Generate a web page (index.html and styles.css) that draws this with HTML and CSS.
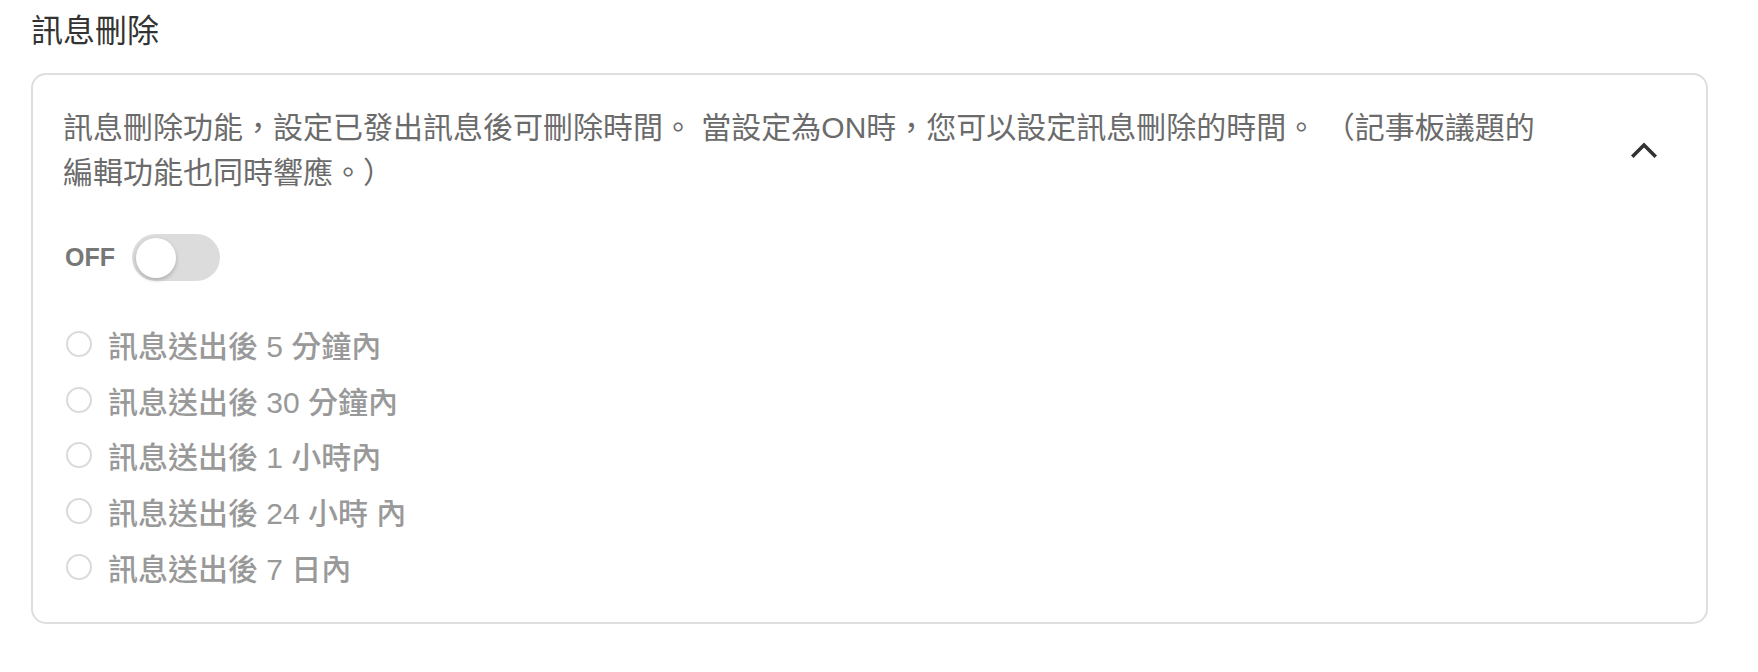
FILE: index.html
```html
<!DOCTYPE html>
<html lang="zh-Hant">
<head>
    <meta charset="UTF-8">
    <meta name="viewport" content="width=device-width, initial-scale=1.0">
    <title>訊息刪除</title>
    <link rel="stylesheet" href="styles.css">
</head>
<body>
    <div class="page">
        <h2 class="section-title">訊息刪除</h2>
        <div class="panel">
            <div class="panel-head">
                <p class="desc">訊息刪除功能，設定已發出訊息後可刪除時間。 當設定為ON時，您可以設定訊息刪除的時間。 （記事板議題的編輯功能也同時響應。）</p>
                <button class="collapse-btn" aria-label="收合">
                    <svg width="26" height="16" viewBox="0 0 26 16">
                        <path d="M2.5 13.5 L13 3 L23.5 13.5" fill="none" stroke="#333" stroke-width="3.6" stroke-linecap="square"/>
                    </svg>
                </button>
            </div>

            <div class="switch-row">
                <span class="switch-label">OFF</span>
                <span class="switch"><span class="knob"></span></span>
            </div>

            <ul class="options">
                <li><span class="radio"></span>訊息送出後 5 分鐘內</li>
                <li><span class="radio"></span>訊息送出後 30 分鐘內</li>
                <li><span class="radio"></span>訊息送出後 1 小時內</li>
                <li><span class="radio"></span>訊息送出後 24 小時 內</li>
                <li><span class="radio"></span>訊息送出後 7 日內</li>
            </ul>
        </div>
    </div>
</body>
</html>
```

FILE: styles.css
```css
body{
    margin:0;
    padding:0;
    background:#fff;
    font-family:"Liberation Sans","Noto Sans CJK TC",sans-serif;
}
.page{
    padding:0 50px 0 31px;
}
.section-title{
    margin:9px 0 20px 0;
    font-size:32px;
    line-height:44px;
    font-weight:normal;
    color:#333;
}
.panel{
    border:2px solid #dedede;
    border-radius:15px;
    padding:30px 30px 27px 30px;
}
.panel-head{
    display:flex;
    justify-content:space-between;
    align-items:center;
}
.desc{
    margin:0;
    width:1486px;
    font-size:30px;
    line-height:45px;
    color:#6b6b6b;
}
.collapse-btn{
    background:none;
    border:none;
    padding:0;
    margin-right:19px;
    width:26px;
    height:16px;
    cursor:pointer;
}
.collapse-btn svg{
    display:block;
}
.switch-row{
    display:flex;
    align-items:center;
    gap:17px;
    margin-top:39px;
    padding-left:2px;
}
.switch-label{
    font-size:25px;
    font-weight:bold;
    color:#777;
}
.switch{
    display:flex;
    align-items:center;
    width:88px;
    height:47px;
    box-sizing:border-box;
    padding:0 4px;
    background:#dcdcdc;
    border-radius:24px;
}
.knob{
    width:40px;
    height:40px;
    border-radius:50%;
    background:#fff;
    box-shadow:0 2px 4px rgba(0,0,0,0.22);
}
.options{
    list-style:none;
    margin:35px 0 0 0;
    padding:0;
}
.options li{
    display:flex;
    align-items:center;
    height:55.8px;
    font-size:30px;
    font-weight:500;
    color:#999;
}
.radio{
    width:26px;
    height:26px;
    box-sizing:border-box;
    border:2px solid #dadada;
    border-radius:50%;
    margin:0 16px 0 3px;
}
```
